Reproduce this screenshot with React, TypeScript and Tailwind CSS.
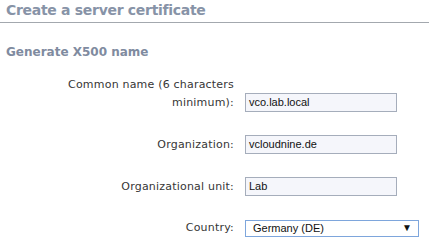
import React from "react";

const labelFont = { fontFamily: '"DejaVu Sans", Verdana, sans-serif' };

function Row({ label, children, first }: { label: React.ReactNode; children: React.ReactNode; first?: boolean }) {
  return (
    <div className={`flex ${first ? "items-end" : "items-center"}`}>
      <div className="w-[234px] flex justify-end">
        <div className="w-[170px] text-right text-[11px] leading-[18px] text-[#363636] tracking-[0.2px]" style={labelFont}>
          {label}
        </div>
      </div>
      <div className="ml-[11px]">{children}</div>
    </div>
  );
}

function Input({ value }: { value: string }) {
  return (
    <div className="w-[152px] h-[19px] border border-[#a5adbb] bg-[#f5f6fb] pl-[3px] flex items-center text-[11px] text-[#111] font-['Liberation_Sans',Arial,sans-serif]">
      {value}
    </div>
  );
}

export default function App() {
  return (
    <div className="w-[429px] h-[248px] bg-white overflow-hidden">
      <div className="h-[23px] border-b border-[#a3a8ae] pl-[6px] pt-[1px]">
        <div className="text-[14px] leading-[18px] font-bold text-[#8793a7] tracking-[-0.3px]" style={labelFont}>
          Create a server certificate
        </div>
      </div>
      <div className="pl-[6px] pt-[22px] text-[12px] leading-[15px] font-bold text-[#7f8ba0]" style={labelFont}>
        Generate X500 name
      </div>
      <div className="flex flex-col mt-[16px] gap-[23px]">
        <Row label="Common name (6 characters minimum):" first>
          <Input value="vco.lab.local" />
        </Row>
        <Row label="Organization:">
          <Input value="vcloudnine.de" />
        </Row>
        <Row label="Organizational unit:">
          <Input value="Lab" />
        </Row>
        <Row label="Country:">
          <div className="w-[174px] h-[17px] border border-[#7ea6dc] bg-white pl-[7px] pr-[6px] flex items-center justify-between text-[11px] text-[#111] font-['Liberation_Sans',Arial,sans-serif]">
            <span>Germany (DE)</span>
            <span className="text-[10px] leading-none">▼</span>
          </div>
        </Row>
      </div>
    </div>
  );
}
